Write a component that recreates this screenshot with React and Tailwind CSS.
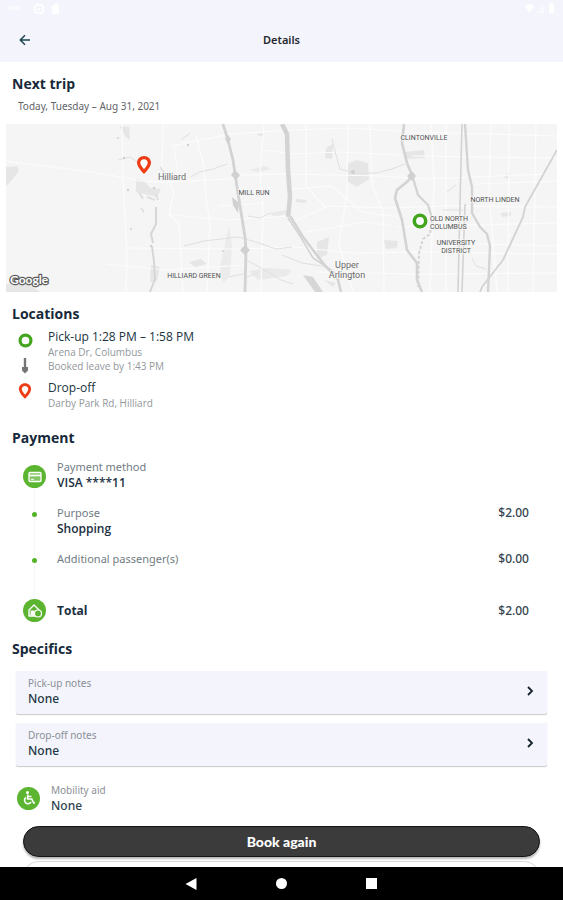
import React from "react";

function Ring({ className }) {
  return (
    <svg viewBox="0 0 16 16" className={className} aria-hidden="true">
      <circle cx="8" cy="8" r="5.8" fill="#fff" stroke="#43a51d" strokeWidth="3.4" />
    </svg>
  );
}

function Pin({ className }) {
  return (
    <svg viewBox="0 0 16 20" className={className} aria-hidden="true">
      <path
        d="M8 1C4 1 1 4 1 7.8 1 12.500 8 19 8 19s7-6.500 7-11.200C15 4 12 1 8 1Z"
        fill="#ee3d14"
      />
      <path d="M8 4.200c-2.200 0-3.700 1.600-3.700 3.600C4.300 10.300 8 14.200 8 14.200s3.700-3.900 3.700-6.400c0-2-1.500-3.600-3.700-3.600Z" fill="#fff" />
    </svg>
  );
}

function TripMap() {
  return (
    <svg viewBox="0 0 551 168" className="block w-full" role="img" aria-label="Trip map">
      <rect width="551" height="168" fill="#f5f5f5" />
      <g fill="#e6e6e6">
        <path d="M0 43l11-1 2 5-8 10-5 5ZM113 2l10 1 1 13-4-3ZM130 55l8 2 6 7 11 1-4 8-9-2-12-3ZM145 141l9 2-3 14-7 1ZM0 160h22l12 8H0Z" />
        <path d="M218 125l5-23 3 20-2 30-7 7-3-16Z" fill="#ebebeb" />
        <path d="M297 151l10 2 10 15h-8Z" fill="#d6d6d6" />
        <path d="M341 40l10-4 11 3 1 16-12 8-10-6ZM320 24l7-4-1 15-7-1ZM398 28l20-2 1 8-20 1ZM378 116l14 1-1 7-11 1ZM290 75l11 1-2 3-9-1ZM311 118l12-5-2 18-10 4ZM497 53l8-4-3 6ZM495 89l10-1v4l-9 1ZM183 138l12-3 6 5-12 3ZM250 10l8-1-2 4ZM318 156l12 3-3 4Z" />
        <path d="M243 147l18-3 25 2-5 6-29 4ZM263 89l16-3 5 3-15 4ZM243 46l15-4 8 3-13 3Z" fill="#eaeaea" />
      </g>
      <g fill="none" stroke="#fcfcfc" strokeWidth="1.200">
        <path d="M0 37l13 2 66 8 42 7 12 3 30 1 60-3 10-4 46-1 96 2 44 3 121-5M116 0l1 55 4 77-1 36M157 0l-1 42 12 26-5 22 10 9 4 69M165 22l60-12 61-4 60-2 60 4 145 4" />
        <path d="M121 124l112 1 55-2 60 6 60-1 143 2M190 12l8 30 2 34 4 22-3 70M258 0l-4 50 3 38-2 80M282 100l40-18 60 2 60-2 109 1M364 0l2 60 11 28 1 80M342 0l-1 70-8 50 14 48M300 0v62l20 22M425 0l3 60-4 108M440 0v168M503 0l-1 168M530 0l-3 168M485 0l-2 70 8 98M286 65l40-3 30 26 36 5M390 103l161-4M406 32l145 2M300 108l60-10 26 4M310 148l100 2 141-1" />
        <path d="M168 22l4 30M258 26l28 4 50-2 60 3M213 82l45-3M160 90l60 6 66-4M100 140l60 6 80-5M470 60l81-3M470 120l81 2" strokeWidth="1" />
      </g>
      <g fill="none" stroke="#e0e0e0" strokeWidth="1">
        <path d="M185 53l8-5 14-3 14-5M178 122l20-5 34-4 18 5 20 7 16-2M239 135l16 9 20 12 12 4M223 153l14-3 5 3 10-5M112 36l12-3 8 5 4 4" />
        <path d="M150 83l0 17-5 10 2 9M146 122l2 16 1 17-5 13" stroke="#d6d6d6" strokeWidth="2" />
        <path d="M326 15l4 16 4 14 14 4h22l16-4 13-5M242 92l12 2 10-5M276 131l20 8 20 3 16 8M437 86h20M441 68l9-7M466 134l4 8 10 3M175 16l9-7" />
        <path d="M133 68l4 7M141 73l8 3M135 84l3 4M150 70l2 6M154 43l4 5" strokeWidth="2" />
      </g>
      <g fill="none" stroke="#d3d3d3" strokeWidth="2.800" strokeLinejoin="round">
        <path d="M217 0l5 16 5 20 4 27 8 50 1 13-1 42" />
        <path d="M276 0l5 10 1 36 2 27-2 20" strokeWidth="4.500" />
        <path d="M284 92l13 21 20 26 15 17 3 12" strokeWidth="2.500" />
        <path d="M282 94l12 18 13 22 14 9 11 8" strokeWidth="1.500" />
        <path d="M398 0l-2 19 5 20 5 12-4 6-11 9-2 8 7 22 5 30 10 13v17l5 12" strokeWidth="2.600" />
        <path d="M407 54l5 17 10 10 4 13" strokeWidth="2.200" />
        <path d="M426 96l-2 14-7 5-4 14-1 34" strokeDasharray="3 2" strokeWidth="2" />
        <path d="M456 0l-2 79-2 89M459 80l-1 30-2 58" strokeWidth="1.600" />
        <path d="M459 0l3 46 4 17v26l8 14 7 7 3 12-2 46" strokeWidth="2.400" />
        <path d="M551 26l-32 57-2 10-20 43-21 27-2 5" strokeWidth="1.800" />
      </g>
      <g fill="#d0d0d0">
        <path d="M229 46l5 5-4 5-5-5ZM239 121l5 5-5 5-5-5ZM222 11l3 4-3 5-3-5ZM406 47l4 5-4 5-5-5ZM226 73l7 6-1 10-5-8Z" />
        <g transform="translate(112 14)">
          <circle cx="0" cy="0" r="1" /><circle cx="6" cy="20" r="1.200" /><circle cx="20" cy="25" r="1.200" />
          <circle cx="10" cy="52" r="1.200" /><circle cx="36" cy="50" r="1.200" /><circle cx="13" cy="91" r="1" />
          <circle cx="70" cy="7" r="1.200" /><circle cx="33" cy="108" r="1.200" /><circle cx="105" cy="113" r="1" />
          <circle cx="235" cy="34" r="2" />
        </g>
      </g>
      <g
        fontFamily="Roboto, sans-serif"
        fontSize="7"
        fill="#505050"
        stroke="#f7f7f7"
        strokeWidth="1.500"
        paintOrder="stroke"
        textAnchor="middle"
      >
        <text x="166" y="56" fontSize="9" fill="#6b6b6b">Hilliard</text>
        <text x="248" y="71">MILL RUN</text>
        <text x="188" y="154">HILLIARD GREEN</text>
        <text x="418" y="16">CLINTONVILLE</text>
        <text x="489" y="78">NORTH LINDEN</text>
        <text x="424" y="97" textAnchor="start">OLD NORTH</text>
        <text x="424" y="105" textAnchor="start">COLUMBUS</text>
        <text x="450" y="121">UNIVERSITY</text>
        <text x="450" y="129">DISTRICT</text>
        <text x="341" y="144" fontSize="9" fill="#6b6b6b">Upper</text>
        <text x="341" y="154" fontSize="9" fill="#6b6b6b">Arlington</text>
      </g>
      <text
        x="4" y="160" fontFamily="Lato, sans-serif" fontSize="12" fontWeight="700"
        fill="#fff" stroke="#5c5c5c" strokeWidth="2.400" strokeLinejoin="round" paintOrder="stroke"
      >
        Google
      </text>
      <svg x="130" y="31" width="16" height="20" viewBox="0 0 16 20"><Pin /></svg>
      <circle cx="414" cy="97" r="8.500" fill="#fff" opacity="0.700" />
      <circle cx="414" cy="97" r="5.700" fill="#fff" stroke="#43a51d" strokeWidth="3.600" />
    </svg>
  );
}

function Heading({ children, className }) {
  return (
    <h2 className={"px-3 font-['Open_Sans',sans-serif] text-sm leading-5 font-bold text-[#17293a] " + className}>
      {children}
    </h2>
  );
}

function Badge({ children }) {
  return (
    <span className="relative flex size-[23px] shrink-0 items-center justify-center rounded-full bg-[#5cb531]">
      {children}
    </span>
  );
}

function Row({ marker, label, value, price, className }) {
  return (
    <li className={"flex " + className}>
      <span className="relative flex w-[23px] shrink-0 justify-center pt-0.5">{marker}</span>
      <div className="ml-[11px] flex-1">
        <p className="text-[11px] leading-4 text-[#727b83]">{label}</p>
        {value && <p className="font-['Open_Sans',sans-serif] font-semibold text-[#1b2f3f]">{value}</p>}
      </div>
      {price && <span className="font-medium text-[#33444f]">{price}</span>}
    </li>
  );
}

function Dot() {
  return <span className="mt-[5px] size-[5px] rounded-full bg-[#55b32a]" />;
}

function NoteCard({ label, value, className }) {
  return (
    <button
      type="button"
      className={
        "mx-4 flex items-center justify-between rounded-xs bg-[#f3f4fc] pt-1 pr-3 pb-[7px] pl-3 text-left shadow-[0_1px_1px_rgba(0,0,0,0.22)] " +
        className
      }
    >
      <span>
        <span className="block text-[10px] leading-4 text-[#8b9096]">{label}</span>
        <span className="block text-xs leading-4 font-medium text-[#233744]">{value}</span>
      </span>
      <svg viewBox="0 0 10 10" className="size-2.5" fill="none" stroke="#15232b" strokeWidth="1.800" aria-hidden="true">
        <path d="M3 1l4 4-4 4" />
      </svg>
    </button>
  );
}

export default function App() {
  return (
    <div className="flex min-h-screen flex-col bg-white font-['Noto_Sans','Open_Sans',sans-serif]">
      <header className="bg-[#f3f4fc]">
        <div className="flex h-4 items-center justify-between px-2">
          <svg viewBox="0 0 60 12" className="h-3 w-15" fill="#fff" aria-hidden="true">
            <path d="M0 4h12v4H0Z" opacity="0.500" />
            <circle cx="31" cy="7" r="4.500" fill="none" stroke="#fff" strokeWidth="2" />
            <circle cx="31" cy="7" r="1.600" />
            <path d="M44 4h2V2h4v2h1v8h-7Z" />
          </svg>
          <svg viewBox="0 0 30 12" className="h-3 w-[30px]" fill="#fff" aria-hidden="true">
            <path d="M0 4q4-4 9 0L4.500 11ZM24 2h1V1h3v1h1v9h-5Z" />
            <path d="M11 11l8-8v8Z" opacity="0.500" />
          </svg>
        </div>
        <div className="grid h-[46px] grid-cols-3 items-center px-[19px] pt-0.5">
          <button type="button" aria-label="Back" className="justify-self-start">
            <svg viewBox="0 0 12 12" className="size-3" fill="none" stroke="#1f4650" strokeWidth="1.500">
              <path d="M11 6H1.500M6 1.200L1.300 6 6 10.800" />
            </svg>
          </button>
          <h1 className="text-center text-[11px] leading-4 font-semibold text-[#25292d]">Details</h1>
        </div>
      </header>

      <main className="flex flex-1 flex-col">
        <Heading className="mt-3">Next trip</Heading>
        <p className="mt-1 px-[18px] text-[10px] leading-4 text-[#5f6468]">Today, Tuesday – Aug 31, 2021</p>
        <div className="mt-2.5 px-1.5">
          <TripMap />
        </div>

        <Heading className="mt-3">Locations</Heading>
        <div className="mt-[5px] flex px-[18px] font-['Open_Sans',sans-serif]">
          <div className="flex w-3.5 flex-col items-center pt-1">
            <Ring className="size-[15px]" />
            <svg viewBox="0 0 8 16" className="mt-2.5 h-4 w-2" fill="#757575" aria-hidden="true">
              <path d="M2.800 0h2.400v9h1.800v3.500L4 15.500 1 12.500V9h1.800Z" />
            </svg>
            <Pin className="mt-2 h-[18px] w-3.5" />
          </div>
          <div className="ml-4 text-[10px] leading-[14px] text-[#92979b]">
            <p className="text-xs leading-4 font-medium text-[#203441]">Pick-up 1:28 PM – 1:58 PM</p>
            <p>Arena Dr, Columbus</p>
            <p>Booked leave by 1:43 PM</p>
            <p className="mt-[7px] text-xs leading-4 font-medium text-[#203441]">Drop-off</p>
            <p>Darby Park Rd, Hilliard</p>
          </div>
        </div>

        <Heading className="mt-[18px]">Payment</Heading>
        <ul className="relative mt-[11px] flex flex-col pr-[34px] pl-[23px] text-xs leading-4">
          <li aria-hidden="true" className="absolute top-4 bottom-4 left-[34px] w-px bg-[#f5f7f6]" />
          <Row
            marker={
              <span className="pt-1">
                <Badge>
                  <svg viewBox="0 0 14 12" className="h-3 w-3.5" aria-hidden="true">
                    <rect x="1" y="1.500" width="12" height="9" rx="1" fill="#fff" fillOpacity="0.250" stroke="#fff" strokeWidth="1.300" />
                    <path d="M1 4.500h12" stroke="#fff" strokeWidth="1.600" />
                    <path d="M3 8.300h3" stroke="#fff" />
                  </svg>
                </Badge>
              </span>
            }
            label="Payment method"
            value="VISA ****11"
            className="h-8"
          />
          <Row marker={<Dot />} label="Purpose" value="Shopping" price="$2.00" className="mt-3.5" />
          <Row marker={<Dot />} label="Additional passenger(s)" price="$0.00" className="mt-3.5" />
          <li className="mt-8 flex items-center">
            <Badge>
              <svg viewBox="0 0 16 16" className="size-4" aria-hidden="true">
                <path d="M2 7l5-5 5 5v6H2Z" fill="none" stroke="#fff" strokeWidth="1.400" strokeLinejoin="round" />
                <path d="M3.500 7.500h4v5h-4Z" fill="#fff" />
                <circle cx="11" cy="10.500" r="3.500" fill="#5cb531" stroke="#fff" strokeWidth="1.200" />
              </svg>
            </Badge>
            <p className="ml-[11px] flex-1 font-['Open_Sans',sans-serif] font-bold text-[#1b2f3f]">Total</p>
            <span className="font-medium text-[#33444f]">$2.00</span>
          </li>
        </ul>

        <Heading className="mt-[17px]">Specifics</Heading>
        <NoteCard label="Pick-up notes" value="None" className="mt-3" />
        <NoteCard label="Drop-off notes" value="None" className="mt-[9px]" />
        <div className="mt-4 flex items-center px-[17px]">
          <Badge>
            <svg viewBox="0 0 16 16" className="size-4" fill="none" stroke="#fff" strokeWidth="1.600" aria-hidden="true">
              <circle cx="6.500" cy="2.600" r="1.500" fill="#fff" stroke="none" />
              <path d="M6.700 4.500v4.500h4l2 4 1.300-.600M7 6.500h3.500M5 7.500a3.400 3.400 0 1 0 5 4.300" />
            </svg>
          </Badge>
          <div className="ml-[11px]">
            <p className="text-[10px] leading-4 text-[#8b9096]">Mobility aid</p>
            <p className="text-xs leading-4 font-medium text-[#2f424e]">None</p>
          </div>
        </div>

        <button
          type="button"
          className="mx-[23px] mt-3 h-[31px] rounded-full border border-[#141414] bg-[#3b3b3b] font-[Lato,sans-serif] text-sm leading-4 font-black text-white shadow-[0_2px_2px_rgba(0,0,0,0.28)]"
        >
          Book again
        </button>
        <div className="mx-[23px] mt-1 h-1.5 overflow-hidden">
          <div className="h-[31px] rounded-full border border-[#d9d9d9]" />
        </div>
      </main>

      <nav className="flex h-[33px] items-center justify-center gap-[79px] bg-black pr-0.5">
        <button type="button" aria-label="System back">
          <svg viewBox="0 0 12 12" className="size-3" fill="#fff"><path d="M11.500 0v12L.500 6Z" /></svg>
        </button>
        <button type="button" aria-label="Home" className="size-[11px] rounded-full bg-white" />
        <button type="button" aria-label="Recent apps" className="size-[11px] bg-white" />
      </nav>
    </div>
  );
}
